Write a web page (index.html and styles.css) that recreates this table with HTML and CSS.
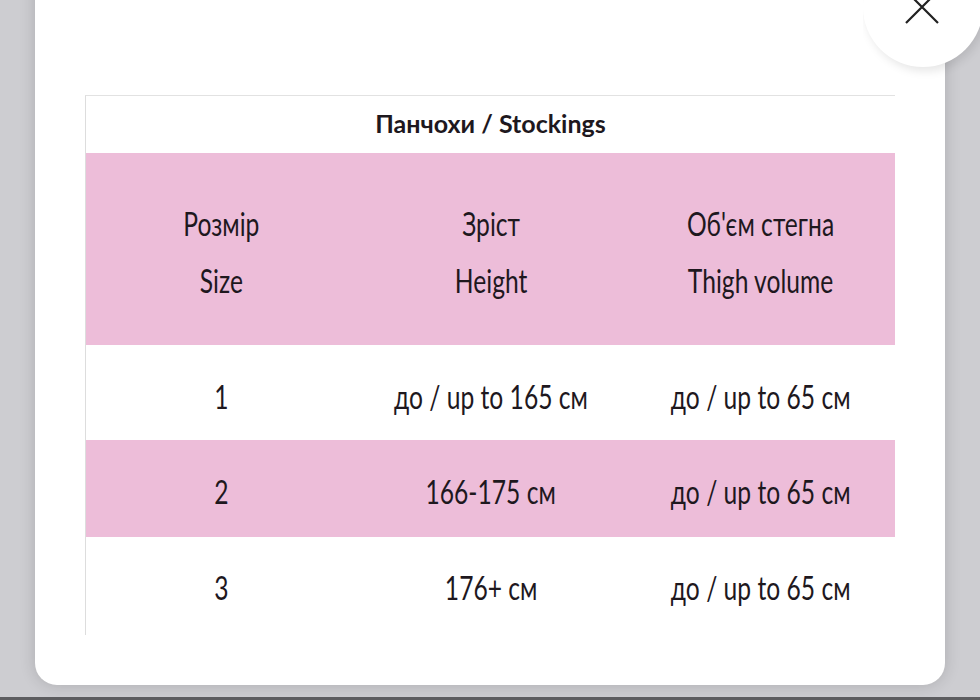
FILE: index.html
```html
<!DOCTYPE html>
<html lang="uk">
<head>
<meta charset="utf-8">
<title>Панчохи / Stockings</title>
<link rel="stylesheet" href="styles.css">
</head>
<body>
<div class="stage">
  <div class="modal">
    <button class="close" aria-label="Close">
      <svg width="34" height="34" viewBox="0 0 34 34"><path d="M1 1 L33 33 M33 1 L1 33" stroke="#222" stroke-width="2.2" fill="none"/></svg>
    </button>
    <div class="sheet">
      <div class="title"><span class="sq">Панчохи / Stockings</span></div>
      <div class="row head">
        <div class="cell"><span class="sq">Розмір<br>Size</span></div>
        <div class="cell"><span class="sq">Зріст<br>Height</span></div>
        <div class="cell"><span class="sq">Об'єм стегна<br>Thigh volume</span></div>
      </div>
      <div class="row r1">
        <div class="cell"><span class="sq">1</span></div>
        <div class="cell"><span class="sq">до / up to 165 см</span></div>
        <div class="cell"><span class="sq">до / up to 65 см</span></div>
      </div>
      <div class="row r2 pink">
        <div class="cell"><span class="sq">2</span></div>
        <div class="cell"><span class="sq">166-175 см</span></div>
        <div class="cell"><span class="sq">до / up to 65 см</span></div>
      </div>
      <div class="row r3">
        <div class="cell"><span class="sq">3</span></div>
        <div class="cell"><span class="sq">176+ см</span></div>
        <div class="cell"><span class="sq">до / up to 65 см</span></div>
      </div>
    </div>
  </div>
  <div class="bottombar"></div>
</div>
</body>
</html>
```

FILE: styles.css
```css
html, body {
  margin: 0;
  padding: 0;
  height: 100%;
  overflow: hidden;
}
body {
  background: #cdcdd1;
  font-family: Lato, "Open Sans", "Noto Sans", sans-serif;
  color: #1e181e;
}
.stage {
  position: relative;
  width: 980px;
  height: 700px;
  overflow: hidden;
}
.modal {
  position: relative;
  margin-left: 35px;
  margin-top: -40px;
  width: 910px;
  height: 725px;
  background: #fff;
  border-radius: 22px;
  box-shadow: 0 0 16px rgba(0, 0, 0, 0.16);
  box-sizing: border-box;
  padding: 135px 50px 0 50px;
}
.close {
  position: absolute;
  left: 828px;
  top: -13px;
  width: 120px;
  height: 120px;
  border-radius: 50%;
  background: #fff;
  border: 0;
  padding: 0;
  display: flex;
  align-items: center;
  justify-content: center;
  box-shadow: 3px 4px 10px rgba(0, 0, 0, 0.10);
  clip-path: inset(0 -30px -30px 0);
}
.close svg {
  margin-left: -2px;
}
.sheet {
  width: 810px;
  height: 540px;
  border-top: 1px solid #e2e2e2;
  border-left: 1px solid #dddddd;
  box-sizing: border-box;
  display: flex;
  flex-direction: column;
}
.sq {
  display: inline-block;
  transform: scaleX(0.77);
  white-space: nowrap;
}
.title {
  height: 57px;
  display: flex;
  align-items: center;
  justify-content: center;
  font-weight: 700;
  font-size: 25px;
}
.title .sq {
  transform: none;
  margin-top: -4px;
}
.row {
  display: grid;
  grid-template-columns: 270px 270px 269px;
  align-items: center;
  font-size: 32px;
}
.cell {
  text-align: center;
}
.head {
  height: 192px;
  background: #edbdd9;
  line-height: 57px;
}
.head .sq {
  margin-top: 6px;
}
.r1 {
  height: 95px;
  padding-top: 8px;
  box-sizing: border-box;
}
.r2 {
  height: 97px;
  padding-top: 6px;
  box-sizing: border-box;
}
.r3 {
  height: 97px;
  padding-top: 4px;
  box-sizing: border-box;
}
.pink {
  background: #edbdd9;
}
.bottombar {
  position: absolute;
  left: 0;
  right: 0;
  bottom: 0;
  height: 3px;
  background: #5d5d60;
}
```
